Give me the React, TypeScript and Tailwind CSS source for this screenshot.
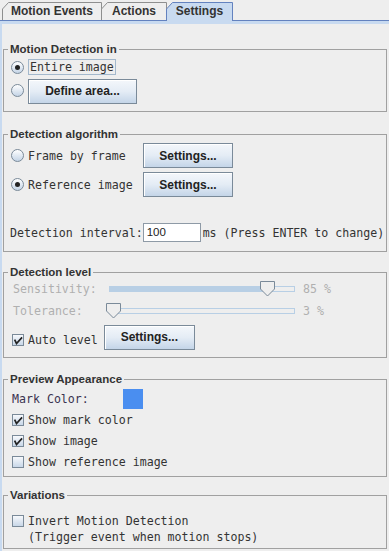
import React from "react";

const mono = "font-['DejaVu_Sans_Mono',monospace] text-[11.6px] leading-[14px] text-[#333333] whitespace-nowrap shrink-0";
const boldSans = "font-['Liberation_Sans',Arial,sans-serif] font-bold text-[11.5px] leading-[14px] text-[#333333] whitespace-nowrap";

function Radio({ checked }: { checked?: boolean }) {
  return (
    <span className="flex h-[13px] w-[13px] shrink-0 items-center justify-center rounded-full border border-[#7a8a99] bg-linear-to-b from-[#ffffff] to-[#c4d4e6]">
      {checked && <span className="h-[5px] w-[5px] rounded-full bg-[#222222]" />}
    </span>
  );
}

function Checkbox({ checked }: { checked?: boolean }) {
  return (
    <span className="flex h-[12px] w-[12px] shrink-0 items-center justify-center border border-[#7a8a99] bg-linear-to-b from-[#f7f9fc] to-[#c8d7e8]">
      {checked && (
        <svg width="10" height="10" viewBox="0 0 10 10">
          <path d="M2 5.5 L3.5 8.5 L8.5 3" fill="none" stroke="#222222" strokeWidth="1.7" strokeLinecap="square" />
        </svg>
      )}
    </span>
  );
}

function Button({ children, w }: { children: React.ReactNode; w: string }) {
  return (
    <button
      className={`${w} h-[25px] shrink-0 border border-[#7a8a99] bg-linear-to-b from-[#f4f7fb] via-[#e4ecf5] to-[#c4d5e8] shadow-[inset_1px_1px_0_#ffffff] font-['Liberation_Sans',Arial,sans-serif] text-[12px] font-bold text-[#222222]`}
    >
      {children}
    </button>
  );
}

function Slider({ thumb, fill }: { thumb: number; fill: number }) {
  return (
    <div className="relative h-[6px] w-[186px] shrink-0 border border-[#b8cfe5]">
      <div className="h-full bg-[#b8cfe5]" style={{ width: fill }} />
      <svg
        className="absolute top-[-6px]"
        style={{ left: thumb }}
        width="16"
        height="16"
        viewBox="0 0 16 16"
      >
        <path d="M0.5 0.5 H14.5 V8 L7.5 15 L0.5 8 Z" fill="#eeeeee" stroke="#7a8a99" />
      </svg>
    </div>
  );
}

function Tab({ label, w, selected, first }: { label: string; w: number; selected?: boolean; first?: boolean }) {
  const h = selected ? 19 : 18;
  return (
    <div
      className={`relative flex shrink-0 items-center justify-center ${selected ? "z-10 -mb-px h-[19px]" : "h-[18px]"} ${first ? "" : "-ml-px"}`}
      style={{ width: w }}
    >
      <svg className="absolute inset-0" width={w} height={h} viewBox={`0 0 ${w} ${h}`}>
        <path
          d={`M0.5 ${h} L0.5 7 L6.5 0.5 L${w - 0.5} 0.5 L${w - 0.5} ${h}`}
          fill={selected ? "#c8daf0" : "#eeeeee"}
          stroke={selected ? "#6382bf" : "#8e8f8f"}
        />
      </svg>
      <span className="relative whitespace-nowrap pb-px font-['Liberation_Sans',Arial,sans-serif] text-[12px] font-bold leading-[14px] text-[#333333]">
        {label}
      </span>
    </div>
  );
}

function Group({ title, className, children }: { title: string; className?: string; children: React.ReactNode }) {
  return (
    <fieldset className={`m-0 min-w-0 border border-[#a0a0a0] px-[4px] pt-0 ${className ?? ""}`}>
      <legend className={`px-[2px] ${boldSans}`}>{title}</legend>
      <div className="flex flex-col pl-[3px]">{children}</div>
    </fieldset>
  );
}

export default function App() {
  return (
    <div className="flex h-[551px] w-[389px] flex-col overflow-hidden bg-[#eeeeee]">
      <div className="flex h-[20px] shrink-0 items-end pl-[2px]">
        <Tab label="Motion Events" w={100} first />
        <Tab label="Actions" w={66} />
        <Tab label="Settings" w={67} selected />
      </div>
      <div className="flex flex-1 flex-col border-t border-[#6382bf]">
        <div className="h-[3px] shrink-0 bg-[#c8daf0]" />
        <div className="flex flex-1 flex-col border-l-2 border-[#c8daf0] pl-px pr-[2px] pt-[18px]">
          <Group title="Motion Detection in" className="pb-[8px]">
            <div className="mt-[2px] flex h-[18px] items-center">
              <Radio checked />
              <span className={`${mono} ml-[4px] border border-[#a3b8cc] px-px leading-[11px]`}>Entire image</span>
            </div>
            <div className="mt-[2px] flex h-[25px] items-center">
              <Radio />
              <span className="ml-[4px]">
                <Button w="w-[109px]">Define area...</Button>
              </span>
            </div>
          </Group>

          <Group title="Detection algorithm" className="mt-[15px] pb-[9px]">
            <div className="mt-[2px] flex h-[25px] items-center">
              <Radio />
              <span className={`${mono} ml-[4px] w-[115px]`}>Frame by frame</span>
              <Button w="w-[90px]">Settings...</Button>
            </div>
            <div className="mt-[4px] flex h-[25px] items-center">
              <Radio checked />
              <span className={`${mono} ml-[4px] w-[115px]`}>Reference image</span>
              <Button w="w-[90px]">Settings...</Button>
            </div>
            <div className="-ml-px mt-[26px] flex h-[19px] items-center">
              <span className={mono}>Detection interval:</span>
              <span className="flex h-[19px] w-[58px] shrink-0 items-center border border-[#8e9aa6] bg-white pl-[3px] font-['Liberation_Sans',Arial,sans-serif] text-[11.5px] text-[#222222]">
                100
              </span>
              <span className={`${mono} ml-[2px]`}>ms (Press ENTER to change)</span>
            </div>
          </Group>

          <Group title="Detection level" className="mt-[13px] pb-[8px]">
            <div className="flex h-[20px] items-center">
              <span className={`${mono} ml-[2px] w-[96px] !text-[#b0b0b0]`}>Sensitivity:</span>
              <Slider thumb={150} fill={158} />
              <span className={`${mono} ml-[8px] !text-[#b0b0b0]`}>85 %</span>
            </div>
            <div className="mt-[2px] flex h-[20px] items-center">
              <span className={`${mono} ml-[2px] w-[96px] !text-[#b0b0b0]`}>Tolerance:</span>
              <Slider thumb={-4} fill={0} />
              <span className={`${mono} ml-[8px] !text-[#b0b0b0]`}>3 %</span>
            </div>
            <div className="mt-[3px] flex h-[25px] items-center">
              <span className="ml-px mt-[6px] flex items-center">
                <Checkbox checked />
                <span className={`${mono} ml-[4px]`}>Auto level</span>
              </span>
              <span className="ml-[6px]">
                <Button w="w-[91px]">Settings...</Button>
              </span>
            </div>
          </Group>

          <Group title="Preview Appearance" className="mt-[14px] pb-[4px]">
            <div className="mt-[3px] flex h-[20px] items-center">
              <span className={`${mono} ml-px w-[111px] !text-[#3a3350]`}>Mark Color:</span>
              <span className="h-[20px] w-[20px] shrink-0 bg-[#4a8ef0]" />
            </div>
            <div className="flex h-[21px] items-center">
              <span className="ml-px flex items-center">
                <Checkbox checked />
              </span>
              <span className={`${mono} ml-[4px]`}>Show mark color</span>
            </div>
            <div className="flex h-[21px] items-center">
              <span className="ml-px flex items-center">
                <Checkbox checked />
              </span>
              <span className={`${mono} ml-[4px]`}>Show image</span>
            </div>
            <div className="flex h-[21px] items-center">
              <span className="ml-px flex items-center">
                <Checkbox />
              </span>
              <span className={`${mono} ml-[4px]`}>Show reference image</span>
            </div>
          </Group>

          <Group title="Variations" className="mt-[11px] pb-[5px]">
            <div className="mt-[9px] flex h-[20px] items-center">
              <span className="ml-px flex items-center">
                <Checkbox />
              </span>
              <span className={`${mono} ml-[4px]`}>Invert Motion Detection</span>
            </div>
            <div className="flex h-[12px] items-center">
              <span className={`${mono} ml-[17px]`}>(Trigger event when motion stops)</span>
            </div>
          </Group>
        </div>
      </div>
    </div>
  );
}
